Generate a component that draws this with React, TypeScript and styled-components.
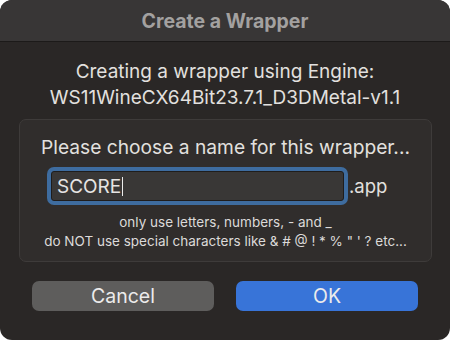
import React from "react";
import styled, { createGlobalStyle } from "styled-components";

const Global = createGlobalStyle`
  html, body { margin: 0; padding: 0; background: #ffffff; }
  body { font-family: Inter, "Noto Sans", "Liberation Sans", sans-serif; }
`;

const Window = styled.div`
  width: 450px;
  height: 340px;
  border-radius: 12px;
  overflow: hidden;
  background: #2a2726;
  display: flex;
  flex-direction: column;
  color: #e2e0df;
`;

const TitleBar = styled.div`
  height: 41px;
  background: #383636;
  border-bottom: 1px solid #1c1a19;
  display: flex;
  align-items: center;
  justify-content: center;
  font-weight: 700;
  font-size: 19.5px;
  color: #a3a1a0;
`;

const Message = styled.div`
  padding-top: 17px;
  text-align: center;
  font-size: 19px;
  line-height: 26px;
`;

const Panel = styled.div`
  margin: 8px 18px 0 19px;
  height: 126px;
  border: 1px solid #3e3b3a;
  border-radius: 7px;
  background: #302d2c;
  display: flex;
  flex-direction: column;
  padding-top: 15px;
  box-sizing: content-box;
`;

const Heading = styled.div`
  text-align: center;
  font-size: 19.2px;
  line-height: 24px;
`;

const InputRow = styled.div`
  margin-top: 12px;
  padding-left: 31px;
  display: flex;
  align-items: center;
`;

const Field = styled.div`
  width: 293px;
  height: 30px;
  box-sizing: border-box;
  border: 1px solid #1f1d1c;
  border-radius: 3px;
  background: #393736;
  box-shadow: 0 0 0 4px #3e6c9f;
  display: flex;
  align-items: center;
  padding-left: 5px;
  font-size: 19px;
  color: #e6e4e3;
`;

const Caret = styled.span`
  display: inline-block;
  width: 1px;
  height: 19px;
  background: #ececec;
  margin-left: 1px;
`;

const Suffix = styled.span`
  margin-left: 5px;
  font-size: 18.5px;
`;

const Hint = styled.div`
  margin-top: 12px;
  text-align: center;
  font-size: 13.5px;
  line-height: 19px;
  color: #dcdad9;
`;

const Buttons = styled.div`
  margin-top: 19px;
  padding: 0 32px;
  display: flex;
  gap: 22px;
`;

const Button = styled.div<{ $primary?: boolean }>`
  flex: 1;
  height: 30px;
  border-radius: 7px;
  background: ${(p) => (p.$primary ? "#3874d8" : "#5e5d5c")};
  display: flex;
  align-items: center;
  justify-content: center;
  font-size: 19.5px;
  color: #ecebeb;
`;

export default function App() {
  return (
    <>
      <Global />
      <Window>
        <TitleBar>Create a Wrapper</TitleBar>
        <Message>
          Creating a wrapper using Engine:
          <br />
          WS11WineCX64Bit23.7.1_D3DMetal-v1.1
        </Message>
        <Panel>
          <Heading>Please choose a name for this wrapper...</Heading>
          <InputRow>
            <Field>
              SCORE
              <Caret />
            </Field>
            <Suffix>.app</Suffix>
          </InputRow>
          <Hint>
            only use letters, numbers, - and _
            <br />
            do NOT use special characters like &amp; # @ ! * % " ' ? etc...
          </Hint>
        </Panel>
        <Buttons>
          <Button>Cancel</Button>
          <Button $primary>OK</Button>
        </Buttons>
      </Window>
    </>
  );
}
